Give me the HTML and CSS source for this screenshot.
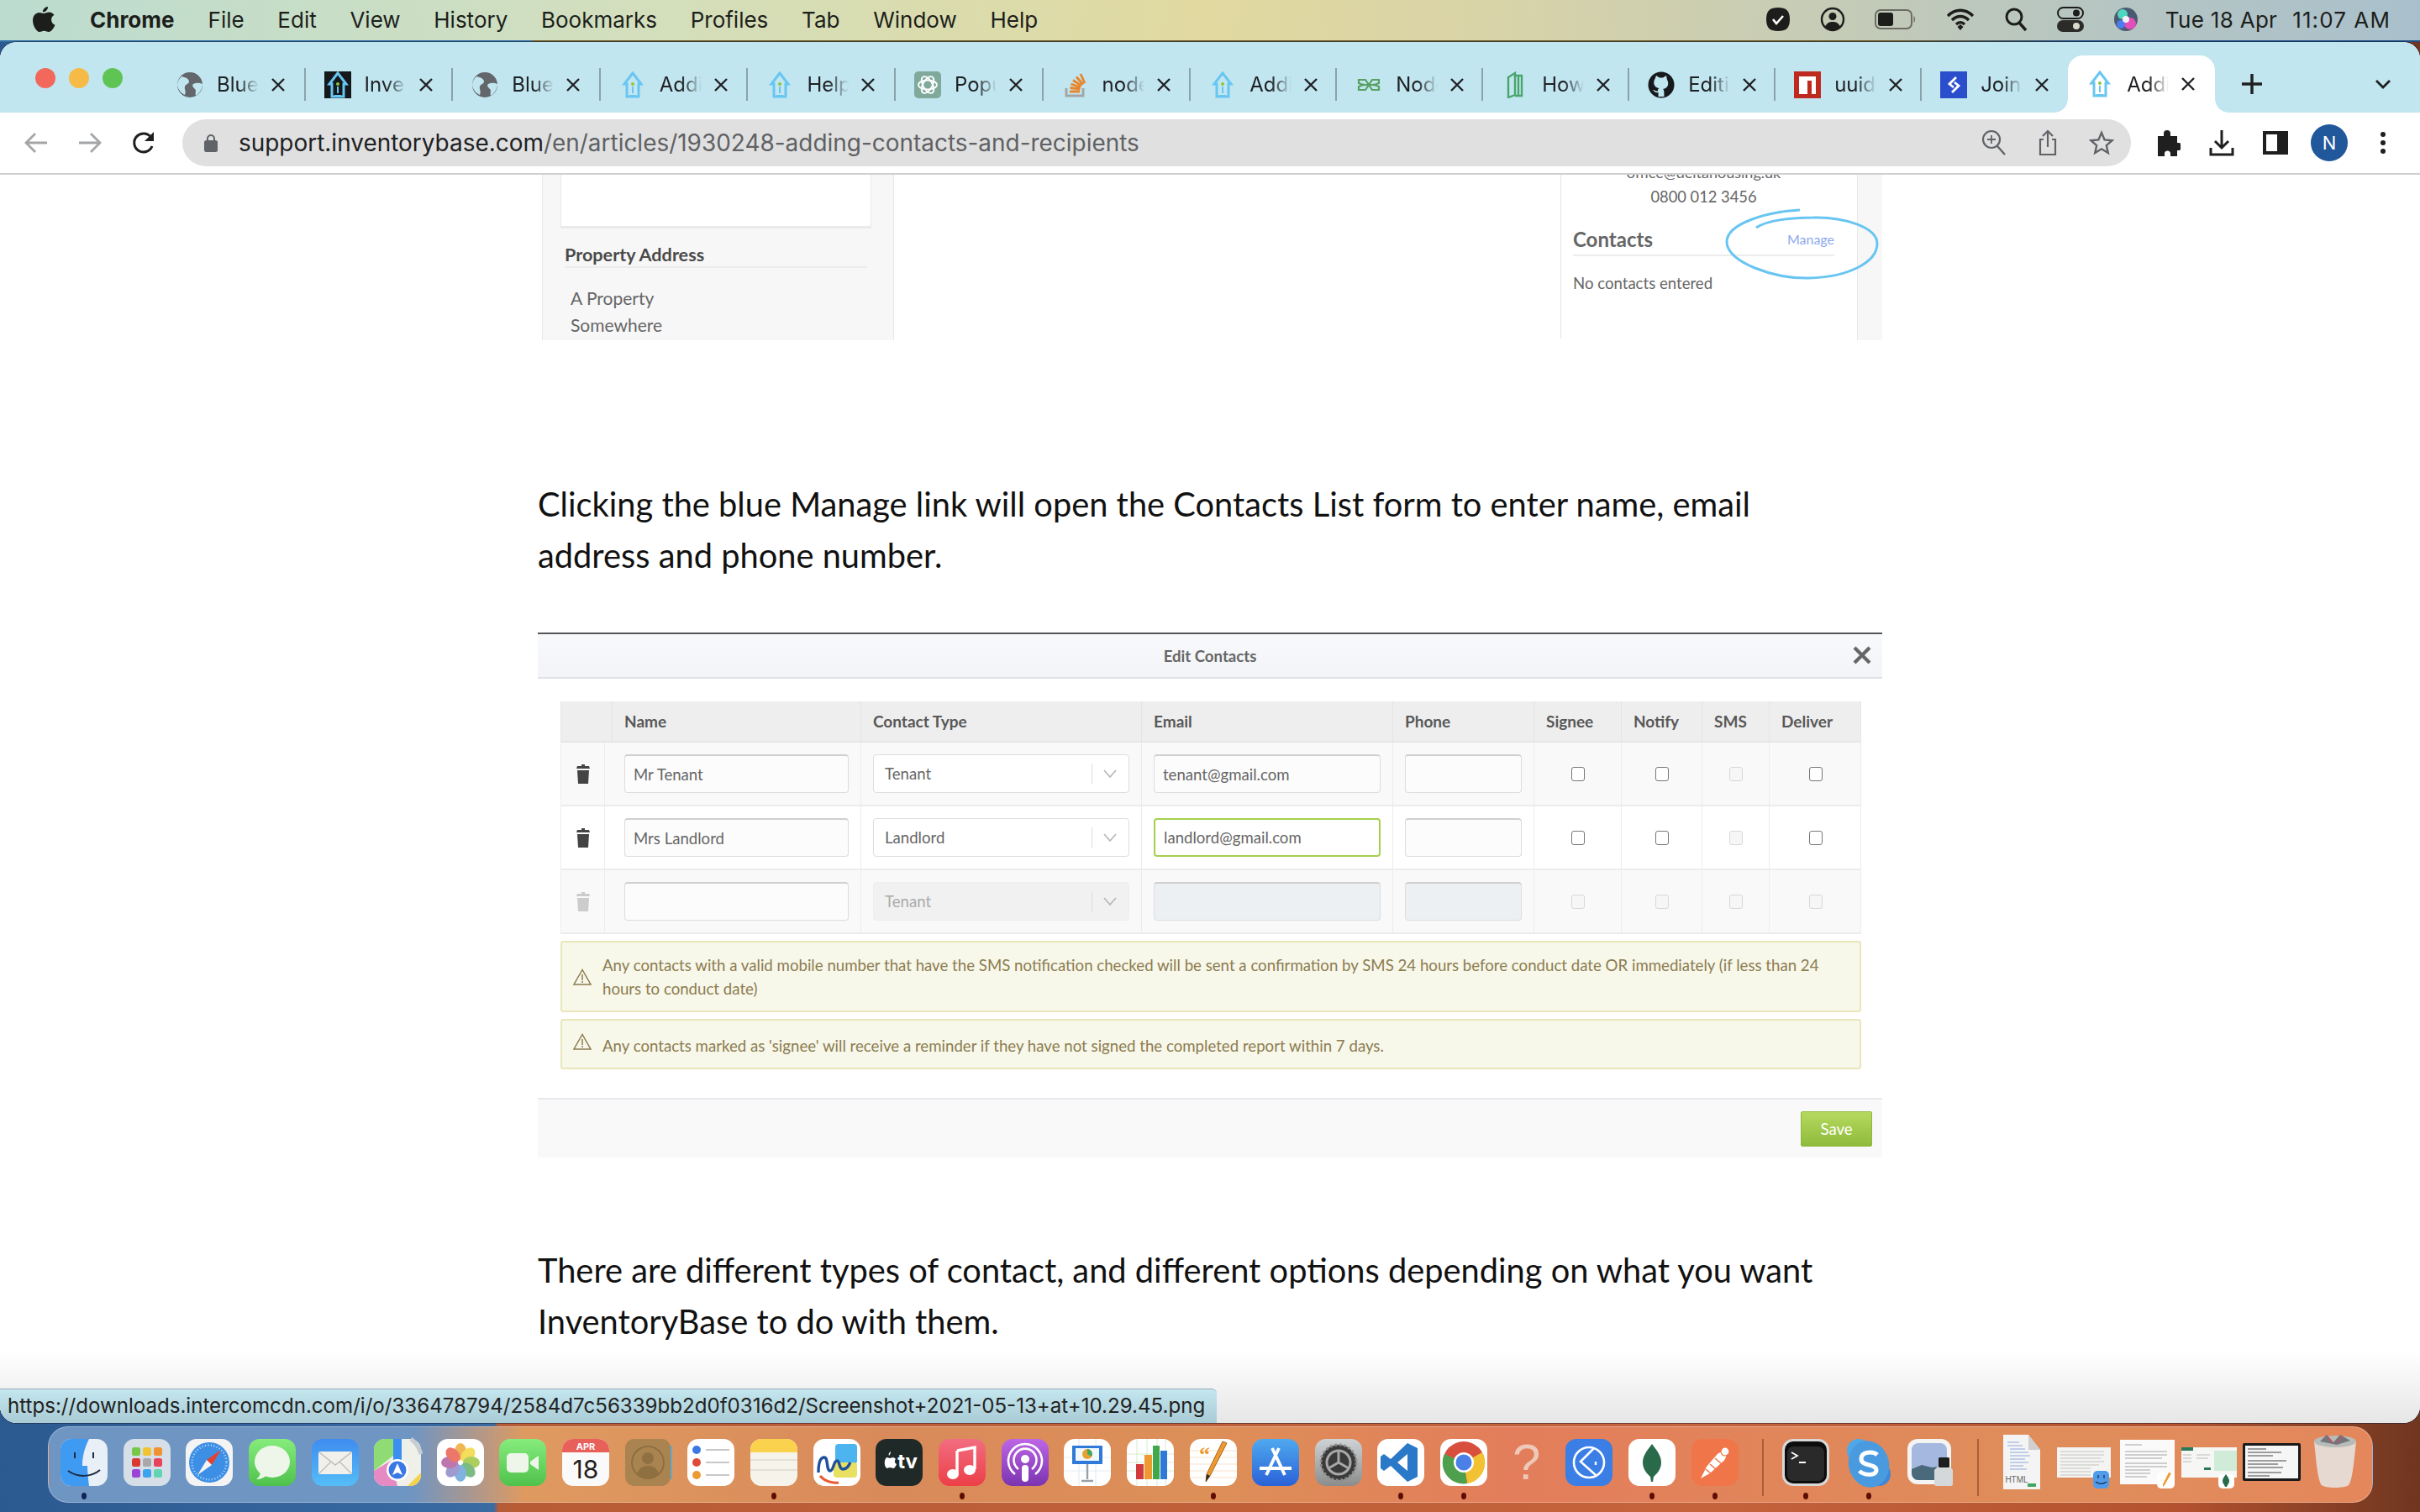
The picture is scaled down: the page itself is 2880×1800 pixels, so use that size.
FILE: index.html
```html
<!DOCTYPE html>
<html lang="en">

<head>
    <meta charset="UTF-8">
    <title>Adding contacts and recipients</title>
    <link rel="stylesheet" href="styles.css">
</head>

<body>

    <!-- shared icons -->
    <svg class="defs" width="0" height="0">
        <defs>
            <linearGradient id="g-blue" x1="0" y1="0" x2="0" y2="1"><stop offset="0" stop-color="#3e8cf0"/><stop offset="1" stop-color="#55bdf8"/></linearGradient>
            <linearGradient id="g-green" x1="0" y1="0" x2="0" y2="1"><stop offset="0" stop-color="#86ec7c"/><stop offset="1" stop-color="#4fc24c"/></linearGradient>
            <linearGradient id="g-red" x1="0" y1="0" x2="0" y2="1"><stop offset="0" stop-color="#f26d80"/><stop offset="1" stop-color="#ec3f48"/></linearGradient>
            <linearGradient id="g-purple" x1="0" y1="0" x2="0" y2="1"><stop offset="0" stop-color="#bd66e6"/><stop offset="1" stop-color="#7b34b0"/></linearGradient>
            <linearGradient id="g-store" x1="0" y1="0" x2="0" y2="1"><stop offset="0" stop-color="#4fa9ee"/><stop offset="1" stop-color="#2a62d8"/></linearGradient>
            <linearGradient id="g-gear" x1="0" y1="0" x2="0" y2="1"><stop offset="0" stop-color="#cfd3d6"/><stop offset="1" stop-color="#8c8c8c"/></linearGradient>
            <symbol id="i-x" viewBox="0 0 16 16"><path d="M1 1l14 14M15 1L1 15" stroke="currentColor" stroke-width="2.400" fill="none"/></symbol>
            <symbol id="i-globe" viewBox="0 0 32 32"><circle cx="16" cy="16" r="15" fill="#63666b"/><path d="M6 6c5 1 9 3 9 6s-4 3-5 6 2 5 0 10C5 26 1 20 1 16S3 9 6 6zM20 15c4-2 8-1 11 0 0 5-3 11-8 14-1-4 1-6-1-8s-4-4-2-6z" fill="#c1e6f0"/></symbol>
            <symbol id="i-house" viewBox="0 0 32 32"><path d="M16 2L6 15h3v15h14V15h3z" fill="none" stroke="#68c6f2" stroke-width="3"/><path d="M12 30h8v-2h-8z" fill="#68c6f2"/><circle cx="16" cy="15" r="2" fill="#8cc63f"/><path d="M16 18v8" stroke="#68c6f2" stroke-width="2"/></symbol>
        </defs>
    </svg>

    <header class="menubar">
        <svg class="apple" width="28" height="32" viewBox="0 0 28 32"><path d="M19 1c.3 3-2.400 6.500-6 6.300C12.700 4 15.800 1.200 19 1zM14 9c2 0 3.500-1.500 6.500-1.500 2.500 0 4.700 1.300 6 3.300-5 3-4.200 10 1 12-1.600 4-4.500 8.200-7.500 8.200-2 0-3-1.300-5.500-1.300s-3.600 1.300-5.500 1.300C5.500 31 1 23.500 1 17.500 1 11.500 4.800 8 8.500 8 10.800 8 12.600 9 14 9z" fill="#1c1e1c"/></svg>
        <strong class="menu-app">Chrome</strong>
        <nav class="menu-items">
            <span>File</span>
            <span>Edit</span>
            <span>View</span>
            <span>History</span>
            <span>Bookmarks</span>
            <span>Profiles</span>
            <span>Tab</span>
            <span>Window</span>
            <span>Help</span>
        </nav>
        <div class="status">
            <svg width="30" height="30" viewBox="0 0 30 30"><path d="M15 1c9 0 14 3 14 14s-5 14-14 14S1 26 1 15 6 1 15 1z" fill="#1d1d1b"/><path d="M9 15l4 5 8-9" stroke="#fff" stroke-width="2.600" fill="none"/></svg>
            <svg width="30" height="30" viewBox="0 0 30 30"><circle cx="15" cy="15" r="13" fill="none" stroke="#1d1d1b" stroke-width="2.400"/><circle cx="15" cy="11.500" r="4.500" fill="#1d1d1b"/><path d="M6 24c2-5 5-6 9-6s7 1 9 6c-2 2-5 4-9 4s-7-2-9-4z" fill="#1d1d1b"/></svg>
            <svg width="50" height="26" viewBox="0 0 50 26"><rect x="1" y="2" width="43" height="22" rx="6" fill="none" stroke="#6c6c64" stroke-width="2"/><rect x="4" y="5" width="18" height="16" rx="3" fill="#1d1d1b"/><path d="M46.500 9c2 1 2 7 0 8z" fill="#6c6c64"/></svg>
            <svg width="34" height="28" viewBox="0 0 34 28"><path d="M2 10c9-9 21-9 30 0M7 15c6-6 14-6 20 0M12 20c3-3 7-3 10 0" fill="none" stroke="#1d1d1b" stroke-width="3.400"/><path d="M13.500 23l3.500-3 3.500 3-3.500 4z" fill="#1d1d1b"/></svg>
            <svg width="28" height="30" viewBox="0 0 28 30"><circle cx="12" cy="12" r="9" fill="none" stroke="#1d1d1b" stroke-width="3"/><path d="M18 19l8 9" stroke="#1d1d1b" stroke-width="3.400"/></svg>
            <svg width="32" height="30" viewBox="0 0 32 30"><rect x="1" y="1" width="30" height="13" rx="6.500" fill="none" stroke="#1d1d1b" stroke-width="2"/><circle cx="23" cy="7.500" r="4" fill="#1d1d1b"/><rect x="0" y="16" width="32" height="14" rx="7" fill="#2b2b29"/><circle cx="23" cy="23" r="4" fill="#d8dccf"/></svg>
            <svg width="30" height="32" viewBox="0 0 30 32"><circle cx="15" cy="16" r="14" fill="#4a5a72"/><circle cx="11" cy="10" r="6" fill="#4fd6c0"/><circle cx="20" cy="21" r="7" fill="#e34fb8"/><circle cx="9" cy="22" r="5" fill="#4b7cf0"/><circle cx="15" cy="16" r="4" fill="#f2f0f8"/></svg>
            <div class="clock"><span>Tue 18 Apr</span><span>11:07 AM</span></div>
        </div>
    </header>

    <div class="window">
        <div class="tabstrip">
            <div class="lights">
                <i class="light red"></i>
                <i class="light yellow"></i>
                <i class="light green"></i>
            </div>

            <div class="tab"><svg class="favicon"><use href="#i-globe"/></svg><span class="tab-title">Blue</span><svg class="tab-x"><use href="#i-x"/></svg></div>
            <div class="tab">
                <svg class="favicon" viewBox="0 0 32 32"><rect width="32" height="40" y="-4" fill="#16191c"/><use href="#i-house" width="32" height="32"/></svg>
                <span class="tab-title">Inve</span><svg class="tab-x"><use href="#i-x"/></svg>
            </div>
            <div class="tab"><svg class="favicon"><use href="#i-globe"/></svg><span class="tab-title">Blue</span><svg class="tab-x"><use href="#i-x"/></svg></div>
            <div class="tab"><svg class="favicon"><use href="#i-house"/></svg><span class="tab-title">Addi</span><svg class="tab-x"><use href="#i-x"/></svg></div>
            <div class="tab"><svg class="favicon"><use href="#i-house"/></svg><span class="tab-title">Help</span><svg class="tab-x"><use href="#i-x"/></svg></div>
            <div class="tab">
                <svg class="favicon" viewBox="0 0 32 32"><rect width="32" height="32" rx="5" fill="#7fa99b"/><g fill="none" stroke="#fff" stroke-width="1.800"><ellipse cx="16" cy="16" rx="11" ry="5.500"/><ellipse cx="16" cy="16" rx="11" ry="5.500" transform="rotate(60 16 16)"/><ellipse cx="16" cy="16" rx="11" ry="5.500" transform="rotate(120 16 16)"/></g></svg>
                <span class="tab-title">Popu</span><svg class="tab-x"><use href="#i-x"/></svg>
            </div>
            <div class="tab">
                <svg class="favicon" viewBox="0 0 32 32"><path d="M5 20v9h20v-9" fill="none" stroke="#a5a5a5" stroke-width="3"/><path d="M9 24h12M9.500 19.500l12 1.500M10.500 15l11.500 4M13 10.500l10 6.500M17 6.500l8 9M22 3l5 11" stroke="#e8842a" stroke-width="2.800"/></svg>
                <span class="tab-title">node</span><svg class="tab-x"><use href="#i-x"/></svg>
            </div>
            <div class="tab"><svg class="favicon"><use href="#i-house"/></svg><span class="tab-title">Addi</span><svg class="tab-x"><use href="#i-x"/></svg></div>
            <div class="tab">
                <svg class="favicon" viewBox="0 0 32 32"><path d="M4 10h8l8 12h8v-4c-4-2-4-2-8-2h-8c-4 0-4 0-8-2zM28 10h-8l-8 12H4v-4c4-2 4-2 8-2h8c4 0 4 0 8-2z" fill="none" stroke="#58a062" stroke-width="2.200"/></svg>
                <span class="tab-title">Node</span><svg class="tab-x"><use href="#i-x"/></svg>
            </div>
            <div class="tab">
                <svg class="favicon" viewBox="0 0 32 32"><path d="M8 7l8-5v26l-8 3zM16 5h8v24h-8M20 5v24" fill="none" stroke="#4aa56c" stroke-width="2.400"/></svg>
                <span class="tab-title">How</span><svg class="tab-x"><use href="#i-x"/></svg>
            </div>
            <div class="tab">
                <svg class="favicon" viewBox="0 0 32 32"><circle cx="16" cy="16" r="15.500" fill="#17191c"/><path d="M10 5l4 2.500h4L22 5l1 5c2.500 4 1.500 10-5 11 1.500 1 1.500 3 1.500 9h-7c0-2.500.2-4 0-5-4 1-5-2-7-3 3 0 3.500 2 6.500 1.500 0-1.500 0-2.500 1.500-3.500-6.500-1-7.500-7-5-11z" fill="#c1e6f0"/></svg>
                <span class="tab-title">Editi</span><svg class="tab-x"><use href="#i-x"/></svg>
            </div>
            <div class="tab">
                <svg class="favicon" viewBox="0 0 32 32"><rect width="32" height="32" fill="#bf2a20"/><path d="M6 6h20v21h-5V11h-5v16H6z" fill="#fff"/></svg>
                <span class="tab-title">uuid</span><svg class="tab-x"><use href="#i-x"/></svg>
            </div>
            <div class="tab">
                <svg class="favicon" viewBox="0 0 32 32"><rect width="32" height="32" fill="#2b4fcc"/><path d="M19 7l-8 8 5 4M14 25l8-8-5-4" fill="none" stroke="#fff" stroke-width="2.800"/></svg>
                <span class="tab-title">Join</span><svg class="tab-x"><use href="#i-x"/></svg>
            </div>
            <div class="tab tab-active"><svg class="favicon"><use href="#i-house"/></svg><span class="tab-title">Addi</span><svg class="tab-x"><use href="#i-x"/></svg></div>

            <svg class="new-tab" width="24" height="24" viewBox="0 0 24 24"><path d="M12 0v24M0 12h24" stroke="#1f1f1f" stroke-width="3.400"/></svg>
            <svg class="tab-list" width="20" height="12" viewBox="0 0 20 12"><path d="M2 2l8 8 8-8" stroke="#1f1f1f" stroke-width="2.800" fill="none"/></svg>
        </div>

        <div class="toolbar">
            <svg width="30" height="28" viewBox="0 0 30 28"><path d="M28 14H4M14 3L3 14l11 11" fill="none" stroke="#a3a5a7" stroke-width="2.800"/></svg>
            <svg width="30" height="28" viewBox="0 0 30 28"><path d="M2 14h24M16 3l11 11-11 11" fill="none" stroke="#a3a5a7" stroke-width="2.800"/></svg>
            <svg width="30" height="30" viewBox="0 0 30 30"><path d="M25 19a11 11 0 1 1-1-10" fill="none" stroke="#1f1f1f" stroke-width="3"/><path d="M27 2v11H16z" fill="#1f1f1f"/></svg>
            <div class="omnibox">
                <svg width="16" height="22" viewBox="0 0 16 22"><path d="M4 9V6a4 4 0 0 1 8 0v3" fill="none" stroke="#606368" stroke-width="2"/><rect y="8" width="16" height="14" rx="2.500" fill="#606368"/></svg>
                <div class="url"><b>support.inventorybase.com</b>/en/articles/1930248-adding-contacts-and-recipients</div>
                <svg class="omni-first" width="30" height="32" viewBox="0 0 30 32"><circle cx="12" cy="12" r="10" fill="none" stroke="#606368" stroke-width="2.200"/><path d="M12 7v10M7 12h10" stroke="#606368" stroke-width="1.800"/><path d="M19 20l9 10" stroke="#606368" stroke-width="2.400"/></svg>
                <svg width="30" height="32" viewBox="0 0 30 32"><path d="M10 12H6v18h18V12h-4M15 21V2M9 8l6-6 6 6" fill="none" stroke="#606368" stroke-width="2.200"/></svg>
                <svg width="30" height="30" viewBox="0 0 30 30"><path d="M15 3l3.600 8.400 9 .8-6.800 6 2 8.800-7.800-4.700L7.200 27l2-8.800-6.800-6 9-.8z" fill="none" stroke="#606368" stroke-width="2.400"/></svg>
            </div>
            <svg class="tool-first" width="30" height="32" viewBox="0 0 30 32"><path d="M3 8h7V5a4 4 0 0 1 8 0v3h8v8h2a4.500 4.500 0 0 1 0 9h-2v7h-8v-3a3.500 3.500 0 0 0-7 0v3H3z" fill="#1f1f1f"/></svg>
            <svg width="30" height="32" viewBox="0 0 30 32"><path d="M15 1v20M7 14l8 8 8-8" fill="none" stroke="#1f1f1f" stroke-width="3"/><path d="M2 22v8h26v-8" fill="none" stroke="#1f1f1f" stroke-width="3"/></svg>
            <svg width="30" height="28" viewBox="0 0 30 28"><path fill-rule="evenodd" d="M0 0h30v28H0zM4 4v20h13V4z" fill="#1f1f1f"/></svg>
            <div class="avatar">N</div>
            <svg class="tool-more" width="16" height="30" viewBox="0 0 16 30"><circle cx="8" cy="5" r="3" fill="#1f1f1f"/><circle cx="8" cy="15" r="3" fill="#1f1f1f"/><circle cx="8" cy="25" r="3" fill="#1f1f1f"/></svg>
        </div>

        <main class="page">
            <div class="shot-top">
                <div class="prop-panel">
                    <div class="prop-box"></div>
                    <h4 class="prop-heading">Property Address</h4>
                    <div class="prop-lines">
                        <div>A Property</div>
                        <div>Somewhere</div>
                    </div>
                </div>
                <div class="contact-panel">
                    <div class="contact-mail">office@deltahousing.uk</div>
                    <div class="contact-phone">0800 012 3456</div>
                    <div class="contact-head">
                        <span class="contact-title">Contacts</span>
                        <a class="contact-manage">Manage</a>
                    </div>
                    <div class="contact-none">No contacts entered</div>
                </div>
                <div class="shot-rail"></div>
                <svg class="scribble" width="183" height="86" viewBox="0 0 183 86"><path d="M89 2C50 4 2 18 2 40c0 25 58 44 98 43 45-1 81-18 81-41 0-20-41-32-76-31-25 0-55 3-68 12" fill="none" stroke="#68c5f2" stroke-width="3"/></svg>
            </div>

            <p class="copy copy-first">Clicking the blue Manage link will open the Contacts List form to enter name, email<br>address and phone number.</p>

            <section class="modal">
                <div class="modal-head">
                    <span>Edit Contacts</span>
                    <svg class="modal-x" width="22" height="22" viewBox="0 0 22 22"><path d="M2 2l18 18M20 2L2 20" stroke="#666" stroke-width="4.200"/></svg>
                </div>

                <div class="modal-body">
                    <div class="grid-row grid-head">
                        <div></div>
                        <div>Name</div>
                        <div>Contact Type</div>
                        <div>Email</div>
                        <div>Phone</div>
                        <div>Signee</div>
                        <div>Notify</div>
                        <div>SMS</div>
                        <div>Deliver</div>
                    </div>

                    <div class="grid-row row-odd">
                        <div class="cell cell-bin"><svg class="bin" width="16" height="23" viewBox="0 0 16 23"><path d="M6 0h4v2h5l1 3H0l1-3h5zM1 7h14l-1 16H2z"/></svg></div>
                        <div class="cell cell-name"><input class="field" value="Mr Tenant"></div>
                        <div class="cell"><div class="select">Tenant<i class="select-bar"></i><svg width="16" height="10" viewBox="0 0 16 10"><path d="M1 1l7 8 7-8" fill="none" stroke="#b5b5b5" stroke-width="1.600"/></svg></div></div>
                        <div class="cell"><input class="field" value="tenant@gmail.com"></div>
                        <div class="cell"><input class="field"></div>
                        <div class="cell cell-check"><i class="check"></i></div>
                        <div class="cell cell-check"><i class="check"></i></div>
                        <div class="cell cell-check"><i class="check check-off"></i></div>
                        <div class="cell cell-check"><i class="check"></i></div>
                    </div>

                    <div class="grid-row">
                        <div class="cell cell-bin"><svg class="bin" width="16" height="23" viewBox="0 0 16 23"><path d="M6 0h4v2h5l1 3H0l1-3h5zM1 7h14l-1 16H2z"/></svg></div>
                        <div class="cell cell-name"><input class="field" value="Mrs Landlord"></div>
                        <div class="cell"><div class="select">Landlord<i class="select-bar"></i><svg width="16" height="10" viewBox="0 0 16 10"><path d="M1 1l7 8 7-8" fill="none" stroke="#b5b5b5" stroke-width="1.600"/></svg></div></div>
                        <div class="cell"><input class="field field-focus" value="landlord@gmail.com"></div>
                        <div class="cell"><input class="field"></div>
                        <div class="cell cell-check"><i class="check"></i></div>
                        <div class="cell cell-check"><i class="check"></i></div>
                        <div class="cell cell-check"><i class="check check-off"></i></div>
                        <div class="cell cell-check"><i class="check"></i></div>
                    </div>

                    <div class="grid-row row-odd row-blank">
                        <div class="cell cell-bin"><svg class="bin" width="16" height="23" viewBox="0 0 16 23"><path d="M6 0h4v2h5l1 3H0l1-3h5zM1 7h14l-1 16H2z"/></svg></div>
                        <div class="cell cell-name"><input class="field"></div>
                        <div class="cell"><div class="select select-off">Tenant<i class="select-bar"></i><svg width="16" height="10" viewBox="0 0 16 10"><path d="M1 1l7 8 7-8" fill="none" stroke="#b5b5b5" stroke-width="1.600"/></svg></div></div>
                        <div class="cell"><input class="field field-off"></div>
                        <div class="cell"><input class="field field-off"></div>
                        <div class="cell cell-check"><i class="check check-off"></i></div>
                        <div class="cell cell-check"><i class="check check-off"></i></div>
                        <div class="cell cell-check"><i class="check check-off"></i></div>
                        <div class="cell cell-check"><i class="check check-off"></i></div>
                    </div>

                    <div class="alert alert-tall">
                        <svg class="alert-icon" width="22" height="20" viewBox="0 0 22 20"><path d="M11 1.500L1 19h20zM11 7v7M11 15v2" fill="none" stroke="#8c7c50" stroke-width="1.500"/></svg>
                        <p>Any contacts with a valid mobile number that have the SMS notification checked will be sent a confirmation by SMS 24 hours before conduct date OR immediately (if less than 24<br>hours to conduct date)</p>
                    </div>
                    <div class="alert alert-short">
                        <svg class="alert-icon" width="22" height="20" viewBox="0 0 22 20"><path d="M11 1.500L1 19h20zM11 7v7M11 15v2" fill="none" stroke="#8c7c50" stroke-width="1.500"/></svg>
                        <p>Any contacts marked as 'signee' will receive a reminder if they have not signed the completed report within 7 days.</p>
                    </div>
                </div>

                <div class="modal-foot">
                    <button class="save">Save</button>
                </div>
            </section>

            <p class="copy copy-second">There are different types of contact, and different options depending on what you want<br>InventoryBase to do with them.</p>
        </main>

        <div class="status-bubble">https://downloads.intercomcdn.com/i/o/336478794/2584d7c56339bb2d0f0316d2/Screenshot+2021-05-13+at+10.29.45.png</div>
    </div>

    <footer class="dock">
        <div class="dock-item running dot-dark">
            <svg viewBox="0 0 56 56"><rect width="56" height="56" rx="13" fill="#e9eff6"/><path d="M13 0h21c-5 10-8 20-8 32h6c0 8 1 16 2 24H13A13 13 0 0 1 0 43V13A13 13 0 0 1 13 0z" fill="#3f9af2"/><path d="M17 16v7M39 16v7" stroke="#1b2b44" stroke-width="2"/><path d="M9 38c11 8 27 8 38-1" fill="none" stroke="#1b2b44" stroke-width="2"/></svg>
        </div>
        <div class="dock-item">
            <svg viewBox="0 0 56 56"><rect width="56" height="56" rx="13" fill="#d6dfe8"/><rect x="10" y="10" width="10" height="10" rx="2.500" fill="#76c946"/><rect x="23" y="10" width="10" height="10" rx="2.500" fill="#f2c230"/><rect x="36" y="10" width="10" height="10" rx="2.500" fill="#ee9232"/><rect x="10" y="23" width="10" height="10" rx="2.500" fill="#d93a30"/><rect x="23" y="23" width="10" height="10" rx="2.500" fill="#a8a8a8"/><rect x="36" y="23" width="10" height="10" rx="2.500" fill="#e8455c"/><rect x="10" y="36" width="10" height="10" rx="2.500" fill="#9a44d8"/><rect x="23" y="36" width="10" height="10" rx="2.500" fill="#3aa4ee"/><rect x="36" y="36" width="10" height="10" rx="2.500" fill="#62d4b4"/></svg>
        </div>
        <div class="dock-item">
            <svg viewBox="0 0 56 56"><rect width="56" height="56" rx="13" fill="#f4f4f4"/><circle cx="28" cy="28" r="24" fill="#3d8fe6"/><circle cx="28" cy="28" r="20.500" fill="none" stroke="#bcdcf8" stroke-width="2.400" stroke-dasharray="1 2.500"/><path d="M42 13L25 25l6 6z" fill="#e8402f"/><path d="M14 43l11-18 6 6z" fill="#f4f4f4"/></svg>
        </div>
        <div class="dock-item">
            <svg viewBox="0 0 56 56"><rect width="56" height="56" rx="13" fill="url(#g-green)"/><ellipse cx="28" cy="27" rx="21" ry="19" fill="#eef6ea"/><path d="M14 38c0 5-2 8-5 10 5 0 10-2 13-6z" fill="#eef6ea"/></svg>
        </div>
        <div class="dock-item">
            <svg viewBox="0 0 56 56"><rect width="56" height="56" rx="13" fill="url(#g-blue)"/><rect x="8" y="15" width="40" height="27" rx="2" fill="#f2f0ea"/><path d="M9 16l19 15 19-15M9 41l14-14M47 41L33 27" fill="none" stroke="#bdbdb8" stroke-width="1.400"/></svg>
        </div>
        <div class="dock-item">
            <svg viewBox="0 0 56 56"><rect width="56" height="56" rx="13" fill="#f0f0ea"/><path d="M0 13A13 13 0 0 1 13 0h10v20L0 38z" fill="#8fdc74"/><path d="M0 38l20-12 8 30H13A13 13 0 0 1 0 43z" fill="#e58ac2"/><path d="M40 56l16-16v3a13 13 0 0 1-13 13z" fill="#f6d24a"/><path d="M23 0h10v30H23z" fill="#3a8ff0"/><path d="M44 0c8 6 10 12 12 18" fill="none" stroke="#c8cdd0" stroke-width="5"/><circle cx="28" cy="37" r="13" fill="#fff"/><circle cx="28" cy="37" r="10.500" fill="#3a78e4"/><path d="M28 29l6 14-6-3-6 3z" fill="#fff"/></svg>
        </div>
        <div class="dock-item">
            <svg viewBox="0 0 56 56"><rect width="56" height="56" rx="13" fill="#fff"/><g opacity=".82"><ellipse cx="28" cy="15" rx="7" ry="10" fill="#f0a52e"/><ellipse cx="37" cy="19" rx="7" ry="10" fill="#f2d63a" transform="rotate(45 37 19)"/><ellipse cx="41" cy="28" rx="10" ry="7" fill="#9cc43a"/><ellipse cx="37" cy="37" rx="7" ry="10" fill="#5fae6a" transform="rotate(-45 37 37)"/><ellipse cx="28" cy="41" rx="7" ry="10" fill="#62a4d8"/><ellipse cx="19" cy="37" rx="7" ry="10" fill="#8a86c8" transform="rotate(45 19 37)"/><ellipse cx="15" cy="28" rx="10" ry="7" fill="#b0589e"/><ellipse cx="19" cy="19" rx="7" ry="10" fill="#e85a4a" transform="rotate(-45 19 19)"/></g></svg>
        </div>
        <div class="dock-item">
            <svg viewBox="0 0 56 56"><rect width="56" height="56" rx="13" fill="url(#g-green)"/><rect x="9" y="17" width="26" height="23" rx="5" fill="#eef6ea"/><path d="M37 27l10-7v17l-10-7z" fill="#eef6ea"/></svg>
        </div>
        <div class="dock-item">
            <svg viewBox="0 0 56 56"><rect width="56" height="56" rx="13" fill="#fafafa"/><path d="M0 16V13A13 13 0 0 1 13 0h30a13 13 0 0 1 13 13v3z" fill="#e8605a"/><text x="28" y="13" class="cal-month">APR</text><text x="28" y="47" class="cal-day">18</text></svg>
        </div>
        <div class="dock-item">
            <svg viewBox="0 0 56 56"><rect x="50" y="8" width="6" height="40" fill="#6aa8c8"/><rect width="54" height="56" rx="11" fill="#a98350"/><circle cx="27" cy="28" r="19" fill="none" stroke="#8a6a3e" stroke-width="1.600"/><circle cx="27" cy="23" r="7" fill="#8f7040"/><path d="M14 42c2-8 8-10 13-10s11 2 13 10c-7 6-19 6-26 0z" fill="#8f7040"/></svg>
        </div>
        <div class="dock-item">
            <svg viewBox="0 0 56 56"><rect width="56" height="56" rx="13" fill="#fff"/><circle cx="11" cy="13" r="5" fill="#3a78e4"/><circle cx="11" cy="28" r="5" fill="#e04a3a"/><circle cx="11" cy="43" r="5" fill="#ee9a32"/><path d="M22 13h28M22 28h28M22 43h28" stroke="#c8c8c8" stroke-width="2"/></svg>
        </div>
        <div class="dock-item running">
            <svg viewBox="0 0 56 56"><rect width="56" height="56" rx="13" fill="#f6f4ea"/><path d="M0 16V13A13 13 0 0 1 13 0h30a13 13 0 0 1 13 13v3z" fill="#fbd24e"/><path d="M0 25h56M0 37h56" stroke="#dcdad0" stroke-width="1.400"/></svg>
        </div>
        <div class="dock-item">
            <svg viewBox="0 0 56 56"><rect width="56" height="56" rx="13" fill="#fff"/><rect x="26" y="6" width="26" height="24" rx="4" fill="#4cb4ee"/><rect x="24" y="28" width="28" height="18" rx="4" fill="#e8e060"/><path d="M6 40c0-14 3-18 7-18 5 0 2 16 7 16 4 0 4-12 8-12s2 10 7 10 7-4 9-8" fill="none" stroke="#1f4f9c" stroke-width="3.400"/><path d="M8 44c5 6 14 9 22 8" stroke="#e85a30" stroke-width="3" fill="none"/></svg>
        </div>
        <div class="dock-item">
            <svg viewBox="0 0 56 56"><rect width="56" height="56" rx="13" fill="#1f2a28"/><path d="M16 20c-1-2 0-4 2-5 0 2-1 4-2 5zM13 22c2 0 3 1 4 1s2-1 4-1c1 0 2 1 3 2-2 2-1 5 1 6-1 3-3 5-4 5s-2-1-4-1-2 1-3 1c-3 0-5-9-1-13z" fill="#fff"/><text x="38" y="35" class="tv-mark">tv</text></svg>
        </div>
        <div class="dock-item running">
            <svg viewBox="0 0 56 56"><rect width="56" height="56" rx="13" fill="url(#g-red)"/><path d="M22 14l21-4v26" fill="none" stroke="#fff" stroke-width="3.400"/><path d="M22 14v27" stroke="#fff" stroke-width="3.400"/><ellipse cx="17" cy="42" rx="7" ry="6" fill="#fff"/><ellipse cx="37" cy="37" rx="7" ry="6" fill="#fff"/></svg>
        </div>
        <div class="dock-item">
            <svg viewBox="0 0 56 56"><rect width="56" height="56" rx="13" fill="url(#g-purple)"/><g fill="none" stroke="#fff" stroke-width="2.600"><path d="M16 42a20 20 0 1 1 24 0"/><path d="M20 36a13.500 13.500 0 1 1 16 0"/></g><circle cx="28" cy="24" r="5" fill="#fff"/><rect x="24" y="31" width="8" height="20" rx="4" fill="#fff"/></svg>
        </div>
        <div class="dock-item">
            <svg viewBox="0 0 56 56"><rect width="56" height="56" rx="13" fill="#fff"/><path d="M0 22h56M0 38h56M18 0v56M38 0v56" stroke="#e3edf5" stroke-width="1.200"/><rect x="10" y="8" width="36" height="22" fill="#2f7ad8"/><rect x="14" y="11" width="28" height="15" fill="#f2f7fc"/><circle cx="28" cy="18" r="6" fill="#e8a030"/><path d="M28 18v-6a6 6 0 0 1 5 9z" fill="#3aa860"/><path d="M28 30v18M21 50h14" stroke="#98a0a8" stroke-width="2.400"/></svg>
        </div>
        <div class="dock-item">
            <svg viewBox="0 0 56 56"><rect width="56" height="56" rx="13" fill="#fff"/><path d="M0 18h56M0 28h56M0 38h56M12 0v56M24 0v56M36 0v56M46 0v56" stroke="#d4eccc" stroke-width="1"/><rect x="11" y="30" width="9" height="18" fill="#d23b3b"/><rect x="21" y="19" width="9" height="29" fill="#ee9a30"/><rect x="31" y="8" width="8" height="40" fill="#3ea84a"/><rect x="40" y="14" width="8" height="34" fill="#2f7ad8"/></svg>
        </div>
        <div class="dock-item running">
            <svg viewBox="0 0 56 56"><rect width="56" height="56" rx="13" fill="#fff"/><path d="M0 14h56M0 22h56M0 30h56M0 38h56M0 46h56" stroke="#f8e2c8" stroke-width="1.200"/><path d="M44 5L24 44l-5 7 1-9 19-39z" fill="#ee9a30" stroke="#a86820" stroke-width="1"/><path d="M24 44l-5 7 1-9z" fill="#2a2a2a"/><text x="11" y="27" class="quote-mark">“</text></svg>
        </div>
        <div class="dock-item">
            <svg viewBox="0 0 56 56"><rect width="56" height="56" rx="13" fill="url(#g-store)"/><path d="M32 11L17 43M24 11l15 32M9 35h38" stroke="#fff" stroke-width="3.800" fill="none"/></svg>
        </div>
        <div class="dock-item">
            <svg viewBox="0 0 56 56"><rect width="56" height="56" rx="13" fill="url(#g-gear)"/><circle cx="28" cy="28" r="21" fill="#3a3a3a"/><circle cx="28" cy="28" r="21" fill="none" stroke="#8a8a8a" stroke-width="3" stroke-dasharray="3 2.500"/><circle cx="28" cy="28" r="14" fill="none" stroke="#a8a8a8" stroke-width="3"/><path d="M28 28V14M28 28l12 7M28 28l-12 7" stroke="#a8a8a8" stroke-width="3"/></svg>
        </div>
        <div class="dock-item running">
            <svg viewBox="0 0 56 56"><rect width="56" height="56" rx="13" fill="#fff"/><path d="M36 5l12 6v34l-12 6-20-19-8 6-4-3V21l4-3 8 6zm0 13L24 28l12 10z" fill="#2a78c8"/></svg>
        </div>
        <div class="dock-item running">
            <svg viewBox="0 0 56 56"><rect width="56" height="56" rx="13" fill="#fff"/><circle cx="28" cy="28" r="25" fill="#d94f3d"/><path d="M28 28L50 16A25 25 0 0 1 32 53z" fill="#f2c233"/><path d="M28 28L32 53A25 25 0 0 1 5 18z" fill="#4ea04f"/><circle cx="28" cy="28" r="12" fill="#fff"/><circle cx="28" cy="28" r="9.500" fill="#4a80e8"/></svg>
        </div>
        <div class="dock-item">
            <div class="dock-missing">?</div>
        </div>
        <div class="dock-item">
            <svg viewBox="0 0 56 56"><rect width="56" height="56" rx="13" fill="#3a7ee6"/><circle cx="28" cy="28" r="18" fill="none" stroke="#fff" stroke-width="2.600"/><path d="M34 11L18 27l18 16" fill="none" stroke="#fff" stroke-width="2.600"/><path d="M36 27v4" stroke="#fff" stroke-width="2.400"/></svg>
        </div>
        <div class="dock-item running">
            <svg viewBox="0 0 56 56"><rect width="56" height="56" rx="13" fill="#fff"/><path d="M28 6c6 8 11 14 11 22 0 9-6 14-9 17l-1 6h-2l-1-6c-3-3-9-8-9-17 0-8 5-14 11-22z" fill="#2a6a4a"/></svg>
        </div>
        <div class="dock-item running">
            <svg viewBox="0 0 56 56"><rect width="56" height="56" rx="13" fill="#f0764a"/><path d="M11 47l7-14 12-14c3-4 10-5 11-1 1 5-3 9-6 11L22 41z" fill="#fff"/><path d="M17 36l7 6M22 30l7 6M28 23l7 6" stroke="#f0764a" stroke-width="1.600"/><circle cx="40" cy="15" r="5" fill="#fff" stroke="#f0764a" stroke-width="1.200"/></svg>
        </div>
        <i class="dock-sep dock-sep-one"></i>
        <div class="dock-item running">
            <svg viewBox="0 0 56 56"><rect width="56" height="56" rx="13" fill="#d8d8d8"/><rect x="3" y="3" width="50" height="50" rx="10" fill="#0c0c0c"/><rect x="6" y="9" width="44" height="41" rx="7" fill="#2a2a2a"/><path d="M11 16l7 4-7 4" fill="none" stroke="#fff" stroke-width="1.800"/><path d="M20 28h8" stroke="#fff" stroke-width="2"/></svg>
        </div>
        <div class="dock-item running">
            <svg viewBox="0 0 56 56"><circle cx="16" cy="14" r="14" fill="#4ea8e8"/><circle cx="40" cy="42" r="14" fill="#3d86d8"/><ellipse cx="28" cy="30" rx="24" ry="28" fill="#4a9ae0" transform="rotate(-15 28 30)"/><path d="M38 19c-4-4-19-5-19 5 0 9 18 5 18 13 0 8-16 6-20 1" fill="none" stroke="#fff" stroke-width="5"/></svg>
        </div>
        <div class="dock-item">
            <svg viewBox="0 0 56 56"><rect x="0" y="0" width="52" height="54" rx="12" fill="#f4f4f2"/><rect x="5" y="5" width="42" height="44" rx="8" fill="#a4b8e0"/><path d="M5 36l12-5 12 3 18-2v9a8 8 0 0 1-8 8H13a8 8 0 0 1-8-8z" fill="#4a6a7c"/><path d="M38 25h11v6l5 6v17c0 2-3 2-3 2H35s-3 0-3-2V37l6-6z" fill="#d4d8da"/><rect x="37" y="22" width="13" height="12" rx="1.500" fill="#1e1e1e"/></svg>
        </div>
        <i class="dock-sep dock-sep-two"></i>
        <div class="dock-item">
            <svg viewBox="0 0 56 56"><path d="M6 -5h30l14 18v47H6z" fill="#f4f4f4"/><path d="M36 -5v18h14z" fill="#d0d0d0"/><path d="M11 4h14M11 8h18M14 12h18M14 16h22M14 20h24M14 24h18M14 28h22M14 32h16M14 36h20" stroke="#8ea8dc" stroke-width="1.200"/><rect x="35" y="53" width="10" height="4" fill="#3fa860"/><text x="22" y="52" class="html-mark">HTML</text></svg>
        </div>
        <div class="dock-item">
            <svg viewBox="0 0 56 56"><rect x="-4" y="10" width="64" height="36" fill="#f4f4f2"/><path d="M0 15h52M0 19h52M0 23h48M0 27h52M0 31h46M0 35h36M0 39h36M0 43h36" stroke="#bcbcbc" stroke-width=".9"/><rect x="39" y="38" width="19" height="21" rx="5" fill="#4f9cec"/><path d="M45 43v4M52 43v4M42 51c4 3 9 3 13 0" stroke="#1b2b44" stroke-width="1.200" fill="none"/></svg>
        </div>
        <div class="dock-item">
            <svg viewBox="0 0 56 56"><rect x="-4" y="1" width="65" height="53" fill="#fafafa"/><path d="M2 7h20M2 15h50M2 19h50M2 23h44M2 29h50M2 33h50M2 37h30M2 41h30M2 45h26" stroke="#9a9a9a" stroke-width=".9"/><rect x="40" y="40" width="21" height="19" rx="5" fill="#fff"/><path d="M57 41L49 55l-2 2 0-3 7-14z" fill="#ee9a30"/></svg>
        </div>
        <div class="dock-item">
            <svg viewBox="0 0 56 56"><rect x="-5" y="10" width="66" height="36" fill="#f6f6f4"/><rect x="-5" y="10" width="14" height="4" fill="#2a7a5a"/><path d="M-3 19h10M-3 23h10M-3 27h10M13 19h16M13 23h14" stroke="#bcbcbc" stroke-width="1"/><rect x="34" y="14" width="27" height="24" fill="#d0ecd8"/><rect x="22" y="34" width="8" height="3" fill="#2a7a5a"/><rect x="39" y="42" width="19" height="17" rx="5" fill="#fff"/><path d="M48 42c3 4 4 6 4 8 0 3-2 4-3 7h-2c-1-3-3-4-3-7 0-2 1-4 4-8z" fill="#2a6a4a"/></svg>
        </div>
        <div class="dock-item">
            <svg viewBox="0 0 56 56"><rect x="-7" y="5" width="69" height="45" rx="2" fill="#1a1a1a"/><rect x="-4" y="8" width="63" height="39" fill="#f6f6f6"/><path d="M-1 12h22M-1 16h40M-1 20h30M-1 26h46M-1 30h36M-1 34h42M-1 40h40M-1 44h26" stroke="#444" stroke-width="1"/></svg>
        </div>
        <div class="dock-item">
            <svg viewBox="0 0 56 56"><path d="M3 3c2 18 4 46 9 52 4 4 28 4 32 0 5-6 7-34 9-52z" fill="#e6e8e6" opacity=".85"/><ellipse cx="28" cy="3" rx="25" ry="7" fill="#b8bcb8"/><path d="M10 3l8-8 8 9 8-9 12 7-16 5z" fill="#70767a"/><path d="M19 -3l6 8M36 -4l-4 9" stroke="#d84a60" stroke-width="1.400"/></svg>
        </div>
    </footer>

</body>

</html>
```

FILE: styles.css
```css
* {
    box-sizing: border-box;
}

body {
    margin: 0;
    width: 2880px;
    height: 1800px;
    overflow: hidden;
    display: flex;
    flex-direction: column;
    font-family: 'Lato', sans-serif;
    background: linear-gradient(90deg, #2b5a90 0, #3a6ba3 20.4%, #b85c36 20.6%, #c4633c 70%, #b4522f 90%, #6f3620 100%);
}

.defs {
    position: absolute;
}

/* top menu bar */
.menubar {
    height: 50px;
    flex: none;
    display: flex;
    align-items: center;
    padding: 0 35px 2px 38px;
    font-family: 'Inter', sans-serif;
    font-size: 26px;
    color: #1d1f1c;
    border-bottom: 2px solid;
    border-image: linear-gradient(90deg, #2f6ea5 22%, #6d5a28 22%, #6d5a28 78%, #1f4f85 86%) 1;
    background: linear-gradient(90deg, #bcdcd0 0, #d2dfbe 25%, #e1d9a0 50%, #d8d3a8 62%, #b8c6c0 85%, #a9c0cc 100%);
}

.apple {
    flex: none;
}

.menu-app {
    margin-left: 41px;
    font-weight: 700;
}

.menu-items {
    display: flex;
    gap: 39.7px;
    margin-left: 40px;
}

.status {
    margin-left: auto;
    display: flex;
    align-items: center;
    gap: 35px;
}

.clock {
    display: flex;
    gap: 18px;
    margin-left: -3px;
    letter-spacing: .3px;
    white-space: nowrap;
}

.clock span:last-child {
    letter-spacing: 1.1px;
}

/* browser window */
.window {
    position: relative;
    flex: none;
    height: 1644px;
    display: flex;
    flex-direction: column;
    overflow: hidden;
    border-radius: 20px;
    background: #fff;
    box-shadow: 0 0 0 1px rgba(20, 30, 50, .5);
}

.tabstrip {
    height: 84px;
    flex: none;
    display: flex;
    align-items: flex-end;
    background: #c1e6f0;
    font-family: 'Inter', sans-serif;
}

.lights {
    display: flex;
    gap: 16px;
    padding-left: 42px;
    width: 188px;
    margin-bottom: 29px;
}

.light {
    width: 24px;
    height: 24px;
    border-radius: 50%;
}

.red {
    background: #f2695c;
}

.yellow {
    background: #f6bb46;
}

.green {
    background: #5fc454;
}

.tab {
    position: relative;
    width: 174px;
    height: 39px;
    flex: none;
    display: flex;
    align-items: center;
    padding-left: 22px;
    margin-bottom: 14px;
    border-right: 2px solid #8aa3aa;
    font-size: 24px;
    color: #202124;
}

/* the tabs on the left are a little wider than the rest */
.tab:nth-child(-n+8) {
    width: 175.6px;
}

.tab:nth-last-child(4) {
    border-right: 0;
}

.tab-active {
    height: 68px;
    width: 175px;
    margin-bottom: 0;
    border: 0;
    border-radius: 18px 18px 0 0;
    background: #fff;
}

.tab-active::before,
.tab-active::after {
    content: '';
    position: absolute;
    bottom: 0;
    width: 16px;
    height: 16px;
}

.tab-active::before {
    left: -16px;
    background: radial-gradient(circle at 0 0, #c1e6f0 15.5px, #fff 16px);
}

.tab-active::after {
    right: -16px;
    background: radial-gradient(circle at 100% 0, #c1e6f0 15.5px, #fff 16px);
}

.favicon {
    width: 32px;
    height: 32px;
    flex: none;
}

.tab-title {
    width: 66px;
    margin: 0 -14px 0 16px;
    white-space: nowrap;
    -webkit-mask-image: linear-gradient(90deg, #000 26px, transparent 50px);
    mask-image: linear-gradient(90deg, #000 26px, transparent 50px);
}

.tab-x {
    width: 16px;
    height: 16px;
    flex: none;
    margin-left: 13px;
    color: #202124;
}

.new-tab {
    flex: none;
    margin: 0 0 22px 32px;
}

.tab-list {
    flex: none;
    margin: 0 34px 28px auto;
}

/* address bar */
.toolbar {
    height: 74px;
    flex: none;
    display: flex;
    align-items: center;
    gap: 34px;
    padding: 0 36px 0 28px;
    border-bottom: 2px solid #cfcfcf;
    background: #fff;
}

.toolbar svg {
    flex: none;
}

.omnibox {
    flex: 1;
    height: 56px;
    display: flex;
    align-items: center;
    gap: 34px;
    margin-left: -3px;
    padding: 0 20px 0 26px;
    border-radius: 28px;
    background: #e0e0e0;
}

.url {
    flex: 1;
    margin-left: -9px;
    font-family: 'Inter', sans-serif;
    font-size: 27.95px;
    color: #5f6164;
    white-space: nowrap;
}

.url b {
    font-weight: 400;
    color: #202124;
}

.tool-first {
    margin-left: -5px;
}

.avatar {
    width: 44px;
    height: 44px;
    flex: none;
    margin-left: -7px;
    display: flex;
    align-items: center;
    justify-content: center;
    border-radius: 50%;
    background: #21579b;
    color: #fff;
    font-family: 'Inter', sans-serif;
    font-size: 22px;
}

/* article */
.page {
    flex: 1;
    min-height: 0;
    overflow: hidden;
    padding: 0 640px;
    background: linear-gradient(180deg, #fff 0, #fff 1400px, #e6e6e6 1486px);
}

.shot-top {
    position: relative;
    height: 197px;
    display: flex;
    overflow: hidden;
    color: #666;
}

.prop-panel {
    width: 419px;
    margin-left: 5px;
    padding: 0 26px 0 21px;
    border: 1px solid #e8e8e8;
    border-width: 0 1px;
    background: #f7f7f7;
}

.prop-box {
    height: 64px;
    border: 1px solid #eaeaea;
    border-bottom-width: 3px;
    border-top: 0;
    background: #fff;
}

.prop-heading {
    margin: 19px 5px 0;
    height: 28px;
    line-height: 24px;
    border-bottom: 2px solid #ececec;
    font-size: 21.6px;
    font-weight: 700;
    color: #4a4a4a;
}

.prop-lines {
    margin-top: 20px;
    padding-left: 12px;
    font-size: 21px;
    line-height: 32px;
}

.contact-panel {
    width: 353px;
    margin-left: auto;
    height: 195px;
    padding: 0 27px 0 14px;
    border-left: 1px solid #e5e5e5;
    font-size: 18px;
}

.contact-mail {
    margin-top: -16px;
    line-height: 26px;
    text-align: center;
    font-size: 18px;
}

.contact-phone {
    margin-top: 3px;
    line-height: 26px;
    text-align: center;
    font-size: 18.3px;
}

.contact-head {
    display: flex;
    align-items: center;
    justify-content: space-between;
    height: 35px;
    margin-top: 23px;
    padding-bottom: 4px;
    border-bottom: 2px solid #ececec;
}

.contact-title {
    font-size: 24px;
    font-weight: 700;
    color: #666;
}

.contact-manage {
    font-size: 16px;
    color: #8ea8ee;
}

.contact-none {
    margin-top: 20px;
    line-height: 24px;
    font-size: 18.6px;
}

.shot-rail {
    width: 30px;
    border-left: 1px solid #e8e8e8;
    background: #f7f7f7;
}

.scribble {
    position: absolute;
    left: 1413px;
    top: 40px;
}

.copy {
    margin: 0;
    font-size: 39.8px;
    line-height: 61px;
    color: #111;
}

.copy-first {
    margin-top: 164px;
}

.copy-second {
    margin-top: 103px;
}

/* edit contacts dialog */
.modal {
    height: 625px;
    margin-top: 62px;
    display: flex;
    flex-direction: column;
    border-top: 2px solid #555;
    color: #666;
}

.modal-head {
    position: relative;
    height: 53px;
    flex: none;
    display: flex;
    align-items: center;
    justify-content: center;
    border-bottom: 2px solid #dfe2e8;
    background: linear-gradient(180deg, #f8f9fb, #f2f4f8);
    font-size: 18.6px;
    font-weight: 700;
}

.modal-x {
    position: absolute;
    right: 13px;
    top: 14px;
}

.modal-body {
    flex: 1;
    padding: 27px 25px 0 27px;
}

.grid-row {
    display: grid;
    grid-template-columns: 52px 305px 334px 299px 168px 104px 96px 80px 110px;
    height: 76px;
    border: 1px solid #ececec;
    border-width: 0 1px 2px;
}

.row-odd {
    background: #f9f9f9;
}

.grid-head {
    height: 49px;
    grid-template-columns: 61px 296px 334px 299px 168px 104px 96px 80px 110px;
    background: #eee;
    border-color: #e6e6e6;
    font-size: 19px;
    font-weight: 700;
    color: #585858;
}

.grid-head div {
    display: flex;
    align-items: center;
    padding-left: 14px;
    border-right: 1px solid #e4e4e4;
}

.grid-head div:last-child {
    border: 0;
}

.cell {
    display: flex;
    align-items: center;
    padding: 0 14px;
    border-right: 1px solid #ececec;
}

.cell:last-child {
    border: 0;
}

.cell-name {
    padding-left: 23px;
}

.cell-bin {
    justify-content: center;
    padding: 0;
}

.bin {
    fill: #444;
}

.row-blank .bin {
    fill: #ccc;
}

.field {
    width: 100%;
    height: 46px;
    padding: 0 10px;
    border: 1px solid #ddd;
    border-top: 2px solid #d0d0d0;
    border-radius: 4px;
    background: #fcfcfc;
    font-family: 'Lato', sans-serif;
    font-size: 18.6px;
    color: #666;
}

.field-focus {
    border: 2px solid #a5d04f;
    background: #fff;
}

.field-off {
    background: #edf0f3;
}

.select {
    width: 100%;
    height: 46px;
    display: flex;
    align-items: center;
    padding: 0 14px 0 13px;
    border: 1px solid #ddd;
    border-radius: 4px;
    background: #fff;
    font-size: 18.6px;
    color: #666;
}

.select-bar {
    width: 1px;
    height: 24px;
    margin: 0 13px 0 auto;
    background: #ddd;
}

.select-off {
    border-color: #eee;
    background: #f1f1f1;
    color: #aaa;
}

.cell-check {
    justify-content: center;
    padding: 0;
}

.check {
    width: 16px;
    height: 17px;
    border: 1.5px solid #777;
    border-radius: 3px;
    background: #fff;
}

.check-off {
    border-color: #d8d8d8;
    background: #f6f6f6;
}

.alert {
    display: flex;
    align-items: center;
    margin-top: 8px;
    padding-left: 13px;
    border: 2px solid #e9e7ba;
    border-radius: 3px;
    background: #f7f7ea;
    color: #8c7c50;
    font-size: 18.65px;
    line-height: 28px;
}

.alert p {
    margin: 0 0 0 13px;
    white-space: nowrap;
}

.alert-tall {
    height: 85px;
}

.alert-short {
    height: 60px;
}

.alert-short p {
    margin-top: 4px;
}

.alert-short .alert-icon {
    margin-bottom: 6px;
}

.modal-foot {
    height: 71px;
    flex: none;
    display: flex;
    align-items: center;
    justify-content: flex-end;
    padding-right: 12px;
    border-top: 2px solid #e8e8ee;
    background: #f9f9f9;
}

.save {
    width: 85px;
    height: 42px;
    border: 1px solid #8fb83e;
    border-radius: 2px;
    background: linear-gradient(180deg, #b5d95e, #8fbb3b);
    color: #fff;
    font-family: 'Lato', sans-serif;
    font-size: 18.6px;
}

.status-bubble {
    position: absolute;
    left: 0;
    bottom: 0;
    width: 1448px;
    height: 41px;
    padding: 3px 0 0 9px;
    border-top: 1px solid #9ab;
    border-top-right-radius: 6px;
    background: linear-gradient(180deg, #c3e6ef, #a9cbd5);
    color: #222;
    font-family: 'Inter', sans-serif;
    font-size: 24.1px;
    line-height: 34px;
    white-space: nowrap;
    overflow: hidden;
}

/* dock */
.dock {
    height: 91px;
    width: 2767px;
    flex: none;
    display: flex;
    gap: 18.65px;
    margin: 4px 0 0 57px;
    padding: 14px 0 0 14px;
    border: 1px solid rgba(255, 255, 255, .3);
    border-radius: 24px;
    background: linear-gradient(90deg, #6f95c3 0, #6f95c3 15.6%, #df9a60 20.5%, #d98a5a 36%, #dd8f58 50%, #e37d5b 63%, #df8d5a 85%, #e4875c 100%);
}

.dock-item {
    position: relative;
    width: 56px;
    height: 56px;
    flex: none;
}

.dock-item svg {
    display: block;
    width: 56px;
    height: 56px;
    overflow: visible;
}

.running::after {
    content: '';
    position: absolute;
    left: 25px;
    bottom: -16px;
    width: 6px;
    height: 8px;
    border-radius: 50%;
    background: #5c0e00;
}

.dot-dark::after {
    background: #0c2458;
}

.dock-sep {
    width: 2px;
    height: 68px;
    flex: none;
    background: #a85f38;
}

.dock-sep-one {
    margin-left: 10px;
    margin-right: 3px;
}

.dock-sep-two {
    margin-left: 8px;
    margin-right: 4px;
}

.dock-missing {
    height: 56px;
    text-align: center;
    font-family: 'Liberation Sans', sans-serif;
    font-size: 60px;
    line-height: 56px;
    color: #eec8b8;
}

.cal-month {
    font: 700 11px 'Inter', sans-serif;
    fill: #fff;
    text-anchor: middle;
}

.cal-day {
    font: 400 30px 'Inter', sans-serif;
    fill: #1f1f1f;
    text-anchor: middle;
}

.tv-mark {
    font: 700 24px 'Inter', sans-serif;
    fill: #fff;
    text-anchor: middle;
}

.quote-mark {
    font: 700 26px 'Liberation Serif', serif;
    fill: #ee9a30;
}

.html-mark {
    font: 400 10px 'Liberation Sans', sans-serif;
    fill: #666;
    text-anchor: middle;
}
```
